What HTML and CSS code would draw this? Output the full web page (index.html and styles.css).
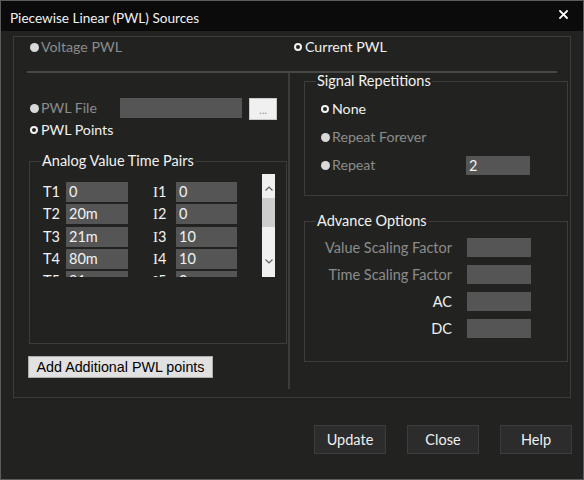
FILE: index.html
```html
<!DOCTYPE html>
<html lang="en">
<head>
<meta charset="utf-8">
<title>Piecewise Linear (PWL) Sources</title>
<link rel="stylesheet" href="styles.css">
</head>
<body>
<div class="window">
  <div class="titlebar">
    <span class="title">Piecewise Linear (PWL) Sources</span>
    <svg class="close" width="9" height="9" viewBox="0 0 9 9"><path d="M1 1 L8 8 M8 1 L1 8" stroke="#ffffff" stroke-width="1.8" stroke-linecap="square"/></svg>
  </div>
  <div class="body">
    <div class="frame">
      <div class="top-row">
        <label class="radio disabled first"><span class="dot filled"></span>Voltage PWL</label>
        <label class="radio"><span class="dot ring"></span>Current PWL</label>
      </div>
      <div class="hr"></div>
      <div class="cols">
        <div class="col-left">
          <div class="file-row">
            <label class="radio disabled file-label"><span class="dot filled"></span>PWL File</label>
            <input class="field file-field" type="text" value="" readonly>
            <button class="browse">...</button>
          </div>
          <div class="points-row">
            <label class="radio"><span class="dot ring"></span>PWL Points</label>
          </div>
          <fieldset class="group pairs">
            <legend>Analog Value Time Pairs</legend>
            <div class="pairs-box">
              <div class="pairs-viewport">
                <div class="pairs-grid">
                  <span class="plabel">T1</span><input class="field pfield" type="text" value="0" readonly>
                  <span class="plabel ilabel"><span class="serif">I</span>1</span><input class="field pfield2" type="text" value="0" readonly>
                  <span class="plabel">T2</span><input class="field pfield" type="text" value="20m" readonly>
                  <span class="plabel ilabel"><span class="serif">I</span>2</span><input class="field pfield2" type="text" value="0" readonly>
                  <span class="plabel">T3</span><input class="field pfield" type="text" value="21m" readonly>
                  <span class="plabel ilabel"><span class="serif">I</span>3</span><input class="field pfield2" type="text" value="10" readonly>
                  <span class="plabel">T4</span><input class="field pfield" type="text" value="80m" readonly>
                  <span class="plabel ilabel"><span class="serif">I</span>4</span><input class="field pfield2" type="text" value="10" readonly>
                  <span class="plabel">T5</span><input class="field pfield" type="text" value="81m" readonly>
                  <span class="plabel ilabel"><span class="serif">I</span>5</span><input class="field pfield2" type="text" value="0" readonly>
                </div>
              </div>
              <div class="scrollbar">
                <div class="sb-up"><svg width="8" height="5" viewBox="0 0 8 5"><path d="M0.5 4.5 L4 1 L7.5 4.5" fill="none" stroke="#606060" stroke-width="1.2"/></svg></div>
                <div class="sb-thumb"></div>
                <div class="sb-track"></div>
                <div class="sb-down"><svg width="8" height="5" viewBox="0 0 8 5"><path d="M0.5 0.5 L4 4 L7.5 0.5" fill="none" stroke="#606060" stroke-width="1.2"/></svg></div>
              </div>
            </div>
          </fieldset>
          <button class="add-btn">Add Additional PWL points</button>
        </div>
        <div class="col-right">
          <fieldset class="group signal">
            <legend>Signal Repetitions</legend>
            <div class="rep-list">
              <div class="rep-row"><label class="radio"><span class="dot ring"></span>None</label></div>
              <div class="rep-row"><label class="radio disabled"><span class="dot filled"></span>Repeat Forever</label></div>
              <div class="rep-row">
                <label class="radio disabled rep-label"><span class="dot filled"></span>Repeat</label>
                <input class="field small-field" type="text" value="2" readonly>
              </div>
            </div>
          </fieldset>
          <fieldset class="group advance">
            <legend>Advance Options</legend>
            <div class="adv-grid">
              <span class="adv-label disabled">Value Scaling Factor</span><input class="field small-field" type="text" value="" readonly>
              <span class="adv-label disabled">Time Scaling Factor</span><input class="field small-field" type="text" value="" readonly>
              <span class="adv-label">AC</span><input class="field small-field" type="text" value="" readonly>
              <span class="adv-label">DC</span><input class="field small-field" type="text" value="" readonly>
            </div>
          </fieldset>
        </div>
      </div>
    </div>
    <div class="actions">
      <button class="action">Update</button>
      <button class="action">Close</button>
      <button class="action">Help</button>
    </div>
  </div>
</div>
</body>
</html>
```
FILE: styles.css
```css
* { box-sizing: border-box; }
html, body { margin: 0; padding: 0; background: #222321; }
body {
  font-family: "Lato", "Noto Sans", sans-serif;
  font-size: 14px;
  color: #f0f0f0;
}
.window {
  width: 584px;
  height: 480px;
  border: 1px solid #5c5c5c;
  background: #222321;
  display: flex;
  flex-direction: column;
}
.titlebar {
  height: 30px;
  background: #0b0b0b;
  display: flex;
  align-items: flex-start;
  padding-left: 9px;
}
.title {
  line-height: 26px;
  padding-top: 4px;
  color: #f2f2f2;
  font-size: 13.6px;
}
.close {
  margin-left: auto;
  margin-top: 9px;
  margin-right: 15px;
}
.body {
  flex: 1;
  padding: 5px 11px 0 12px;
}
.frame {
  width: 558px;
  height: 362px;
  border: 1px solid #3c3d3b;
}
.top-row {
  height: 34px;
  display: flex;
  padding-left: 16px;
}
.top-row .first { flex: 0 0 264px; }
.radio {
  display: flex;
  align-items: center;
  height: 20px;
  line-height: 20px;
  gap: 2px;
  white-space: nowrap;
  font-size: 14.2px;
}
.disabled { color: #8c8c8c; }
.dot {
  display: inline-block;
  width: 9px;
  height: 9px;
  border-radius: 50%;
  flex: 0 0 auto;
}
.dot.filled { background: #d9d9d9; }
.dot.ring {
  width: 8px;
  height: 8px;
  border: 2px solid #f2f2f2;
  margin-right: 1px;
}
.hr {
  height: 2px;
  margin: 0 13px;
  background: #474846;
}
.cols {
  height: 316px;
  display: flex;
}
.col-left {
  width: 276px;
  border-right: 2px solid #3c3d3b;
  padding-top: 25px;
}
.col-right {
  flex: 1;
}
.file-row {
  display: flex;
  align-items: flex-start;
  height: 22px;
  padding-left: 16px;
}
.file-label { flex: 0 0 90px; }
.field {
  border: none;
  outline: none;
  background: #555555;
  color: #f2f2f2;
  font-family: "Lato", "Noto Sans", sans-serif;
  font-size: 14.5px;
  padding: 0 3px;
  margin: 0;
  height: 20px;
  line-height: 20px;
}
.file-field { width: 122px; }
.browse {
  margin-left: 7px;
  width: 28px;
  height: 22px;
  background: #f0f0f0;
  border: 1px solid #c8c8c8;
  color: #8a8a8a;
  font-family: "Noto Sans", sans-serif;
  font-size: 10px;
  padding: 2px 0 0 0;
  line-height: 14px;
}
.points-row {
  height: 20px;
  padding-left: 16px;
}
.group {
  margin: 0;
  padding: 0;
  border: 1px solid #3c3d3b;
  min-inline-size: 0;
}
.group legend {
  margin-left: 11px;
  padding: 0 1px;
  line-height: 16px;
  height: 16px;
  color: #f2f2f2;
  font-size: 14.5px;
}
.pairs {
  margin: 13px 1px 0 15px;
  padding: 5px 0 66px 0;
}
.pairs-box {
  display: flex;
}
.pairs-viewport {
  width: 232px;
  height: 103px;
  overflow: hidden;
}
.pairs-grid {
  display: grid;
  grid-template-columns: 23px 62px 25px 23px 61px;
  grid-auto-rows: 20px;
  row-gap: 2.33px;
  padding: 8px 0 0 13px;
  align-items: center;
}
.plabel {
  color: #f2f2f2;
  line-height: 20px;
  font-size: 14.5px;
}
.serif { font-family: "Liberation Serif", serif; font-size: 15px; }
.pfield { width: 62px; }
.pfield2 { width: 61px; }
.ilabel { grid-column: 4; }
.scrollbar {
  width: 13px;
  height: 103px;
  background: #f0f0f0;
  display: flex;
  flex-direction: column;
}
.sb-up {
  height: 24px;
  display: flex;
  justify-content: center;
  padding-top: 12px;
}
.sb-thumb {
  height: 29px;
  background: #cdcdcd;
}
.sb-track { flex: 1; }
.sb-down {
  height: 24px;
  display: flex;
  justify-content: center;
  padding-top: 6px;
}
.add-btn {
  display: block;
  margin: 12px 0 0 14px;
  width: 185px;
  height: 22px;
  background: #e1e1e1;
  border: 1px solid #adadad;
  color: #000000;
  font-family: "Liberation Sans", Arial, sans-serif;
  font-size: 14.3px;
  padding: 0;
  line-height: 20px;
}
.signal {
  margin: 0 2px 0 14px;
  padding: 10px 0 20px 0;
}
.rep-list { padding-left: 16px; }
.rep-row {
  height: 20px;
  display: flex;
  align-items: center;
  margin-bottom: 8px;
}
.rep-row:last-child { margin-bottom: 0; }
.rep-label { flex: 0 0 145px; }
.small-field { width: 64px; height: 19px; line-height: 19px; }
.advance {
  margin: 17px 2px 0 14px;
  padding: 9px 36px 23px 0;
}
.adv-grid {
  display: grid;
  grid-template-columns: 1fr 64px;
  column-gap: 15px;
  grid-auto-rows: 19px;
  row-gap: 8px;
  align-items: center;
}
.adv-label {
  text-align: right;
  line-height: 19px;
  white-space: nowrap;
  font-size: 14.5px;
}
.actions {
  display: flex;
  justify-content: flex-end;
  gap: 21px;
  margin-top: 27px;
}
.action {
  width: 72px;
  height: 29px;
  background: #2c2c2c;
  border: 1px solid #3d3d3d;
  color: #f0f0f0;
  font-family: "Lato", "Noto Sans", sans-serif;
  font-size: 14.5px;
  padding: 0;
}
```
